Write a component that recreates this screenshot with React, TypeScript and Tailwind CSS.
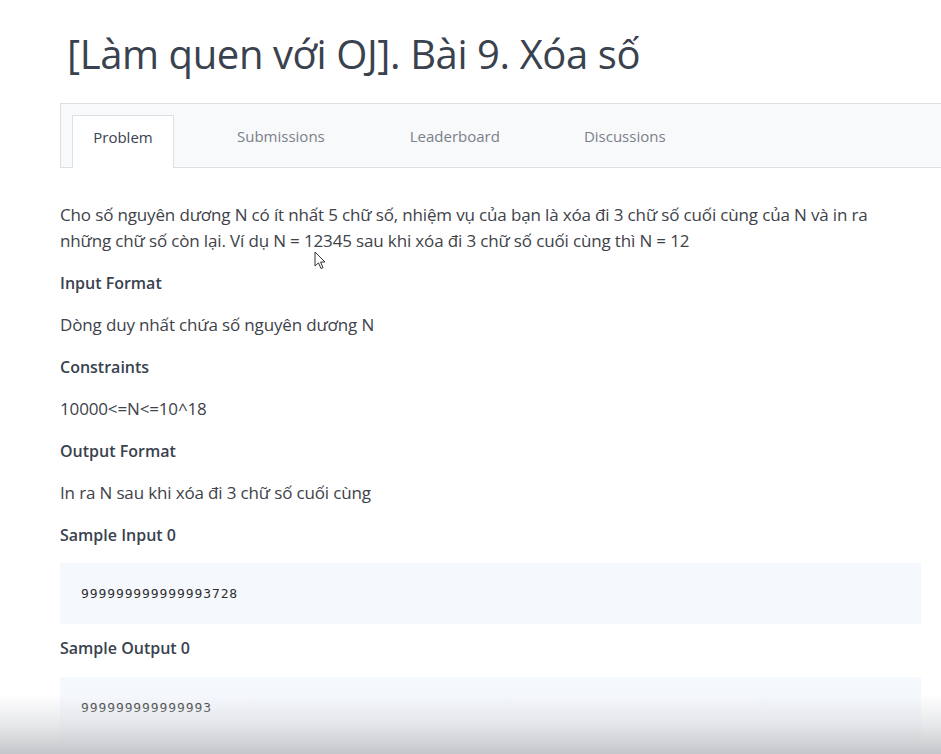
export default function App() {
  const font = { fontFamily: '"Open Sans", "Noto Sans", sans-serif' };
  const mono = { fontFamily: '"DejaVu Sans Mono", monospace' };
  return (
    <div className="relative w-[941px] h-[754px] overflow-hidden bg-white text-[#3d4046]" style={font}>
      <h1 className="pl-[67px] pt-[28px] text-[40px] leading-[52px] font-normal text-[#39424e] tracking-[-0.4px]">
        [Làm quen với OJ]. Bài 9. Xóa số
      </h1>
      <div className="ml-[60px] mt-[23px] h-[65px] border border-r-0 border-[#dcdfe3] bg-[#f8f9fa] flex items-end pl-[11px]">
        <div className="w-[102px] h-[53px] -mb-px bg-white border border-b-0 border-[#dcdfe3] flex items-center justify-center pb-[10px] text-[15px] text-[#39424e]">
          Problem
        </div>
        <div className="h-[53px] flex items-center pb-[9px] text-[15px] text-[#7a808a]">
          <span className="ml-[63px]">Submissions</span>
          <span className="ml-[85px]">Leaderboard</span>
          <span className="ml-[84px]">Discussions</span>
        </div>
      </div>
      <div className="pl-[60px] pr-[20px] pt-[34px] text-[17px] text-[#3e4249]">
        <p className="leading-[26px] tracking-[-0.15px] pr-[40px]">
          Cho số nguyên dương N có ít nhất 5 chữ số, nhiệm vụ của bạn là xóa đi 3 chữ số cuối cùng của N và in ra những chữ số còn lại. Ví dụ N = 12345 sau khi xóa đi 3 chữ số cuối cùng thì N = 12
        </p>
        <h3 className="mt-[16px] leading-[26px] text-[16px] font-semibold text-[#39424e]">Input Format</h3>
        <p className="mt-[16px] leading-[26px] tracking-[-0.15px]">Dòng duy nhất chứa số nguyên dương N</p>
        <h3 className="mt-[16px] leading-[26px] text-[16px] font-semibold text-[#39424e]">Constraints</h3>
        <p className="mt-[16px] leading-[26px] tracking-[-0.15px]">10000&lt;=N&lt;=10^18</p>
        <h3 className="mt-[16px] leading-[26px] text-[16px] font-semibold text-[#39424e]">Output Format</h3>
        <p className="mt-[16px] leading-[26px] tracking-[-0.15px]">In ra N sau khi xóa đi 3 chữ số cuối cùng</p>
        <h3 className="mt-[16px] leading-[26px] text-[16px] font-semibold text-[#39424e]">Sample Input 0</h3>
        <div className="mt-[15px] h-[61px] bg-[#f5f8fc] flex items-center pl-[21px] text-[13px] tracking-[0.9px] text-[#2e2e2e]" style={mono}>
          999999999999993728
        </div>
        <h3 className="mt-[11px] leading-[26px] text-[16px] font-semibold text-[#39424e]">Sample Output 0</h3>
        <div className="mt-[16px] h-[64px] bg-[#f5f8fc] flex items-center pl-[21px] pb-[3px] text-[13px] tracking-[0.9px] text-[#2e2e2e]" style={mono}>
          999999999999993
        </div>
      </div>
      <div className="absolute left-0 right-0 bottom-0 h-[60px] bg-gradient-to-b from-transparent via-[#d8dade99] to-[#c4c6c9]" />
      <svg className="absolute left-[314px] top-[251px]" width="14" height="20" viewBox="0 0 14 20">
        <path d="M1 1 L1 15 L4.5 11.8 L7 17.5 L9 16.6 L6.6 11 L11 11 Z" fill="white" stroke="#333" strokeWidth="1" strokeLinejoin="round" />
      </svg>
    </div>
  );
}
